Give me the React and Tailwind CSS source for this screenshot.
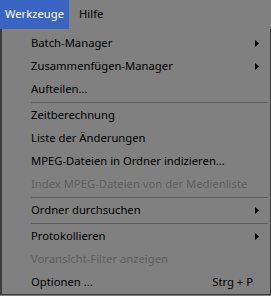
import React from "react";

const items = [
  { label: "Batch-Manager", sub: true },
  { label: "Zusammenfügen-Manager", sub: true },
  { label: "Aufteilen..." },
  { sep: true },
  { label: "Zeitberechnung" },
  { label: "Liste der Änderungen" },
  { label: "MPEG-Dateien in Ordner indizieren..." },
  { label: "Index MPEG-Dateien von der Medienliste", disabled: true },
  { sep: true },
  { label: "Ordner durchsuchen", sub: true },
  { sep: true },
  { label: "Protokollieren", sub: true },
  { label: "Voransicht-Filter anzeigen", disabled: true },
  { label: "Optionen ...", shortcut: "Strg + P" },
];

const Arrow = () => (
  <svg width="4" height="7" viewBox="0 0 4 7" className="mr-[10px]">
    <path d="M0 0 L4 3.5 L0 7 Z" fill="#000" />
  </svg>
);

export default function App() {
  return (
    <div
      className="w-[271px] h-[296px] bg-[#808080] text-[11.25px] text-black overflow-hidden"
      style={{ fontFamily: '"Noto Sans", "Open Sans", sans-serif' }}
    >
      {/* Menüleiste */}
      <div className="flex h-[29px] items-center">
        <div className="h-full w-[69px] flex items-center justify-center bg-[#3a64c4] text-white">
          Werkzeuge
        </div>
        <div className="pl-[10px]">Hilfe</div>
      </div>

      {/* Dropdown */}
      <div className="w-[271px] h-[266px] border-l-2 border-r border-b border-[#3c3c3c] pt-[3px] pr-[1px]">
        {items.map((it, i) =>
          it.sep ? (
            <div key={i} className="h-[3px] flex items-center pl-[29px] pr-[1px]">
              <div className="h-px w-full bg-[#5c5c5c]" />
            </div>
          ) : (
            <div key={i} className="h-[23px] flex items-center pl-[29px]">
              <span className={it.disabled ? "flex-1 text-[#5e5e5e]" : "flex-1"}>
                {it.label}
              </span>
              {it.sub && <Arrow />}
              {it.shortcut && <span className="mr-[16px]">{it.shortcut}</span>}
            </div>
          )
        )}
      </div>
    </div>
  );
}
